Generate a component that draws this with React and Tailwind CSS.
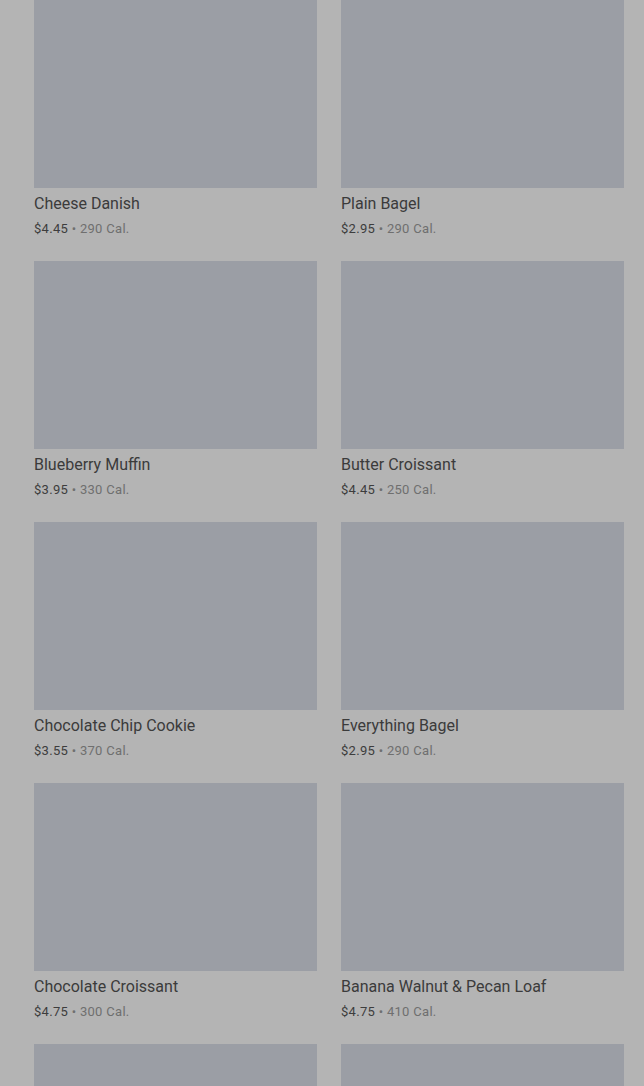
import React from 'react';

const items = [
  { name: 'Cheese Danish', price: '$4.45', cal: '290 Cal.' },
  { name: 'Plain Bagel', price: '$2.95', cal: '290 Cal.' },
  { name: 'Blueberry Muffin', price: '$3.95', cal: '330 Cal.' },
  { name: 'Butter Croissant', price: '$4.45', cal: '250 Cal.' },
  { name: 'Chocolate Chip Cookie', price: '$3.55', cal: '370 Cal.' },
  { name: 'Everything Bagel', price: '$2.95', cal: '290 Cal.' },
  { name: 'Chocolate Croissant', price: '$4.75', cal: '300 Cal.' },
  { name: 'Banana Walnut & Pecan Loaf', price: '$4.75', cal: '410 Cal.' },
];

const ItemCard = ({ item }) => (
  <div className="flex flex-col pb-[22px]">
    <div className="h-[188px] w-full bg-[#9b9ea5]" />
    <p className="mt-1 text-[16px] leading-6 text-[#3b3b3b]">{item.name}</p>
    <p className="mt-[3px] text-[13px] leading-5 tracking-[0.3px] text-[#3d3d3d]">
      {item.price} <span className="text-[#6f6f6f]">•</span>{' '}
      <span className="text-[#6f6f6f]">{item.cal}</span>
    </p>
  </div>
);

export default function App() {
  return (
    <div className="h-[1086px] overflow-hidden bg-[#b4b4b4] font-['Roboto',sans-serif]">
      <div className="grid grid-cols-2 gap-x-6 pl-[34px] pr-[20px]">
        {items.map((item) => (
          <ItemCard key={item.name} item={item} />
        ))}
        {/* next row, only the photos are in view */}
        <div className="h-[188px] bg-[#9b9ea5]" />
        <div className="h-[188px] bg-[#9b9ea5]" />
      </div>
    </div>
  );
}
